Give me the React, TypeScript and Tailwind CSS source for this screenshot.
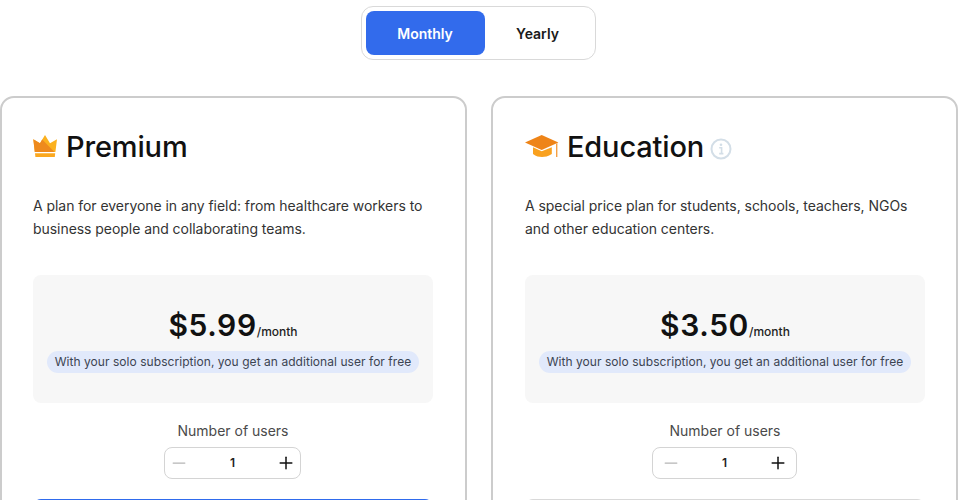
import { Minus, Plus } from 'lucide-react';

type Plan = {
  name: string;
  price: string;
  description: string[];
  icon: React.ReactNode;
  info?: boolean;
  cardClass: string;
  stepperClass: string;
  buttonColor: string;
};

function CrownIcon() {
  return (
    <svg width="25" height="22" viewBox="0 0 25 22" className="shrink-0 mb-[2px]">
      <path d="M0.3 4.3 L7 8.3 L12 0 L17 8.3 L24 4.3 L22.4 17 L1.8 17 Z" fill="#fbb11f" />
      <path d="M0.3 4.3 L7 8.3 L9.2 4.6 L21.5 17 L1.8 17 Z" fill="#ee8a1d" />
      <path d="M2 18.2 H22.2 L21.8 22 H2.4 Z" fill="#fba81f" />
    </svg>
  );
}

function GradCapIcon() {
  return (
    <svg width="34" height="22" viewBox="0 0 34 22" className="shrink-0 mb-[2px]">
      <path d="M16.7 0 L33.4 7.6 L16.7 15 L0 7.6 Z" fill="#ee8418" />
      <path d="M8 12.2 L16.7 16.2 L26.8 12.2 V19 C23 21.4 20 22 17 22 C14 22 11 21.4 8 19 Z" fill="#f9a11f" />
      <path d="M31 8.7 L32.4 8.1 V22 H31 Z" fill="#f5a045" />
    </svg>
  );
}

function InfoIcon() {
  return (
    <svg width="22" height="22" viewBox="0 0 22 22" className="shrink-0 ml-[6px] mt-[3px]" fill="none">
      <circle cx="11" cy="11" r="9.5" stroke="#d3dee7" strokeWidth="2" />
      <circle cx="11" cy="6.8" r="1.3" fill="#d3dee7" />
      <path d="M9.2 9.8 H11.6 V15.4 M9.2 15.6 H13.4" stroke="#d3dee7" strokeWidth="1.6" />
    </svg>
  );
}

const PLANS: Plan[] = [
  {
    name: 'Premium',
    price: '$5.99',
    description: [
      'A plan for everyone in any field: from healthcare workers to',
      'business people and collaborating teams.',
    ],
    icon: <CrownIcon />,
    cardClass: 'w-[467px] pl-[31px] pr-[32px]',
    stepperClass: 'w-[137px] px-[4px]',
    buttonColor: 'bg-[#2f6bed]',
  },
  {
    name: 'Education',
    price: '$3.50',
    description: [
      'A special price plan for students, schools, teachers, NGOs',
      'and other education centers.',
    ],
    icon: <GradCapIcon />,
    info: true,
    cardClass: 'w-[467px] pl-[32px] pr-[31px]',
    stepperClass: 'w-[145px] px-[8px]',
    buttonColor: 'bg-[#d9d9d9]',
  },
];

function PlanCard({ plan }: { plan: Plan }) {
  return (
    <div className={`${plan.cardClass} h-[460px] shrink-0 border-2 border-[#cccccc] rounded-[14px] bg-white pt-[31px]`}>
      <div className="flex items-center h-[36px] gap-[8px]">
        {plan.icon}
        <div className="flex items-center">
          <h2 className="text-[29px] leading-[36px] font-medium tracking-[-0.15px] text-[#111111]">{plan.name}</h2>
          {plan.info && <InfoIcon />}
        </div>
      </div>

      <p className="mt-[29px] text-[14px] leading-[23px] tracking-[-0.05px] text-[#333333]">
        {plan.description[0]}
        <br />
        {plan.description[1]}
      </p>

      <div className="mt-[35px] h-[128px] bg-[#f7f7f7] rounded-[8px] flex flex-col items-center pt-[30px]">
        <div className="flex items-baseline h-[40px]">
          <span className="text-[30px] leading-[40px] font-semibold tracking-[0.6px] text-[#111111]">{plan.price}</span>
          <span className="text-[12px] font-medium text-[#222222]">/month</span>
        </div>
        <div className="mt-[6px] h-[22px] px-[8px] rounded-full bg-[#e1e9fb] text-[12px] leading-[22px] tracking-[0.05px] text-[#3c4452]">
          With your solo subscription, you get an additional user for free
        </div>
      </div>

      <div className="mt-[18px] text-center text-[14px] leading-[20px] text-[#4a4a4a]">Number of users</div>
      <div className="mt-[6px] flex justify-center pr-[1px]">
        <div
          className={`h-[32px] ${plan.stepperClass} border border-[#d4d4d4] rounded-[8px] flex items-center justify-between`}
        >
          <Minus size={20} strokeWidth={1.5} className="text-[#b5b5b5]" />
          <span className="text-[12px] font-semibold text-[#222222]">1</span>
          <Plus size={20} strokeWidth={1.8} className="text-[#111111]" />
        </div>
      </div>

      <div className={`mt-[20px] h-[48px] rounded-[8px] ${plan.buttonColor}`} />
    </div>
  );
}

export default function App() {
  return (
    <div className="w-[958px] h-[500px] overflow-hidden bg-white font-['Inter',sans-serif]">
      <div className="flex justify-center pt-[6px] pr-[2px]">
        <div className="w-[235px] h-[54px] border border-[#d9d9d9] rounded-[12px] p-[4px] flex">
          <div className="w-[119px] bg-[#326bec] rounded-[8px] flex items-center justify-center text-[14px] font-semibold text-white">
            Monthly
          </div>
          <div className="flex-1 flex items-center justify-center text-[14px] font-semibold text-[#1a1a1a]">Yearly</div>
        </div>
      </div>
      <div className="mt-[36px] flex gap-[24px]">
        {PLANS.map((plan) => (
          <PlanCard key={plan.name} plan={plan} />
        ))}
      </div>
    </div>
  );
}
